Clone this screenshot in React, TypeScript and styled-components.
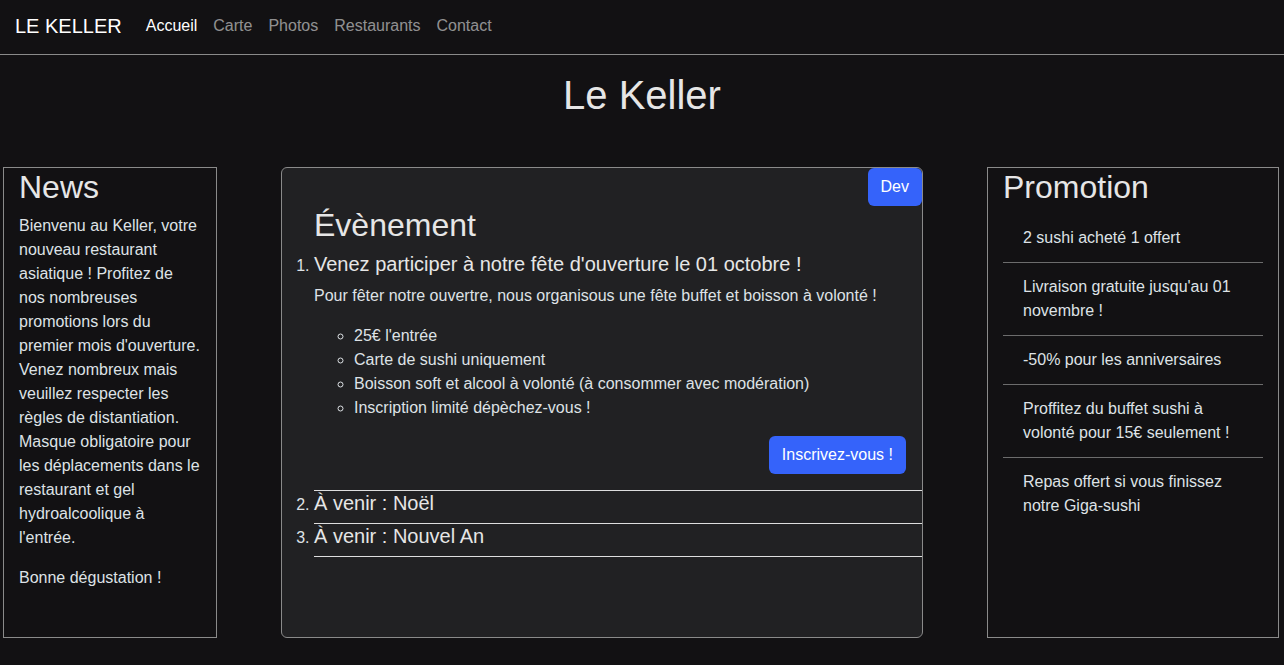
import styled, { createGlobalStyle } from "styled-components";

const GlobalStyle = createGlobalStyle`
  html, body {
    margin: 0;
    padding: 0;
    background: #121113;
    color: #dee2e6;
    font-family: "Liberation Sans", Arial, sans-serif;
    font-size: 16px;
    line-height: 1.5;
  }
  * { box-sizing: border-box; }
`;

const navLinks = ["Accueil", "Carte", "Photos", "Restaurants", "Contact"];

const promotions = [
  "2 sushi acheté 1 offert",
  "Livraison gratuite jusqu'au 01 novembre !",
  "-50% pour les anniversaires",
  "Proffitez du buffet sushi à volonté pour 15€ seulement !",
  "Repas offert si vous finissez notre Giga-sushi",
];

const details = [
  "25€ l'entrée",
  "Carte de sushi uniquement",
  "Boisson soft et alcool à volonté (à consommer avec modération)",
  "Inscription limité dépèchez-vous !",
];

export default function App(): JSX.Element {
  return (
    <>
      <GlobalStyle />
      <Navbar>
        <Brand>LE KELLER</Brand>
        <NavList>
          {navLinks.map((link, index) => (
            <NavLink key={link} active={index === 0}>
              {link}
            </NavLink>
          ))}
        </NavList>
      </Navbar>

      <PageTitle>Le Keller</PageTitle>

      <MainRow>
        <SideBox>
          <BoxTitle>News</BoxTitle>
          <Paragraph>
            Bienvenu au Keller, votre nouveau restaurant asiatique ! Profitez de
            nos nombreuses promotions lors du premier mois d'ouverture. Venez
            nombreux mais veuillez respecter les règles de distantiation.
            Masque obligatoire pour les déplacements dans le restaurant et gel
            hydroalcoolique à l'entrée.
          </Paragraph>
          <Paragraph>Bonne dégustation !</Paragraph>
        </SideBox>

        <EventCard>
          <CardHeader>
            <Button>Dev</Button>
          </CardHeader>
          <EventTitle>Évènement</EventTitle>
          <EventList>
            <EventItem>
              <EventName>
                Venez participer à notre fête d'ouverture le 01 octobre !
              </EventName>
              <Paragraph>
                Pour fêter notre ouvertre, nous organisous une fête buffet et
                boisson à volonté !
              </Paragraph>
              <DetailList>
                {details.map((d) => (
                  <li key={d}>{d}</li>
                ))}
              </DetailList>
              <ActionRow>
                <Button>Inscrivez-vous !</Button>
              </ActionRow>
            </EventItem>
            <EventItem>
              <EventName>À venir : Noël</EventName>
            </EventItem>
            <EventItem>
              <EventName>À venir : Nouvel An</EventName>
            </EventItem>
          </EventList>
        </EventCard>

        <SideBox>
          <BoxTitle>Promotion</BoxTitle>
          <PromoList>
            {promotions.map((promo) => (
              <PromoItem key={promo}>{promo}</PromoItem>
            ))}
          </PromoList>
        </SideBox>
      </MainRow>
    </>
  );
}

const Navbar = styled.nav`
  height: 55px;
  display: flex;
  align-items: center;
  padding: 0 15px 2px;
  border-bottom: 1px solid #8a8a8a;
`;

const Brand = styled.span`
  font-size: 20px;
  color: #fff;
  margin-right: 16px;
  line-height: 30px;
`;

const NavList = styled.div`
  display: flex;
`;

const NavLink = styled.span<{ active: boolean }>`
  padding: 8px;
  font-size: 16px;
  color: ${({ active }) => (active ? "#fff" : "rgba(255, 255, 255, 0.55)")};
`;

const PageTitle = styled.h1`
  margin: 16px 0 48px;
  text-align: center;
  font-size: 40px;
  font-weight: 400;
  line-height: 48px;
  color: #e6e6e6;
`;

const MainRow = styled.main`
  display: grid;
  grid-template-columns: 214px 1fr 292px;
  column-gap: 64px;
  height: 471px;
  padding: 0 5px 0 3px;
`;

const SideBox = styled.section`
  border: 1px solid #8a8a8a;
  padding: 0 15px;
`;

const BoxTitle = styled.h2`
  margin: 0 0 8px;
  font-size: 32px;
  font-weight: 400;
  line-height: 38px;
  color: #e6e6e6;
`;

const Paragraph = styled.p`
  margin: 0 0 16px;
`;

const EventCard = styled.section`
  background: #212123;
  border: 1px solid #8a8a8a;
  border-radius: 6px;
  padding-left: 32px;
`;

const CardHeader = styled.div`
  display: flex;
  justify-content: flex-end;
`;

const Button = styled.button`
  height: 38px;
  padding: 0 13px;
  border: none;
  border-radius: 6px;
  background: #3563fa;
  color: #fff;
  font-family: inherit;
  font-size: 16px;
`;

const EventTitle = styled.h2`
  margin: 0 0 8px;
  font-size: 32px;
  font-weight: 400;
  line-height: 38px;
  color: #e6e6e6;
`;

const EventList = styled.ol`
  margin: 0;
  padding: 0;
`;

const EventItem = styled.li`
  border-bottom: 1px solid #dedede;
`;

const EventName = styled.h3`
  margin: 0 0 8px;
  font-size: 20px;
  font-weight: 400;
  line-height: 24px;
  color: #e6e6e6;
`;

const DetailList = styled.ul`
  margin: 0 0 16px;
  padding-left: 40px;
  list-style: circle;
`;

const ActionRow = styled.div`
  display: flex;
  justify-content: flex-end;
  padding: 0 16px 16px 0;
`;

const PromoList = styled.ul`
  margin: 0;
  padding: 0;
  list-style: none;
`;

const PromoItem = styled.li`
  padding: 12px 20px;
  border-bottom: 1px solid #6c6c6c;
  &:last-child {
    border-bottom: none;
  }
`;
